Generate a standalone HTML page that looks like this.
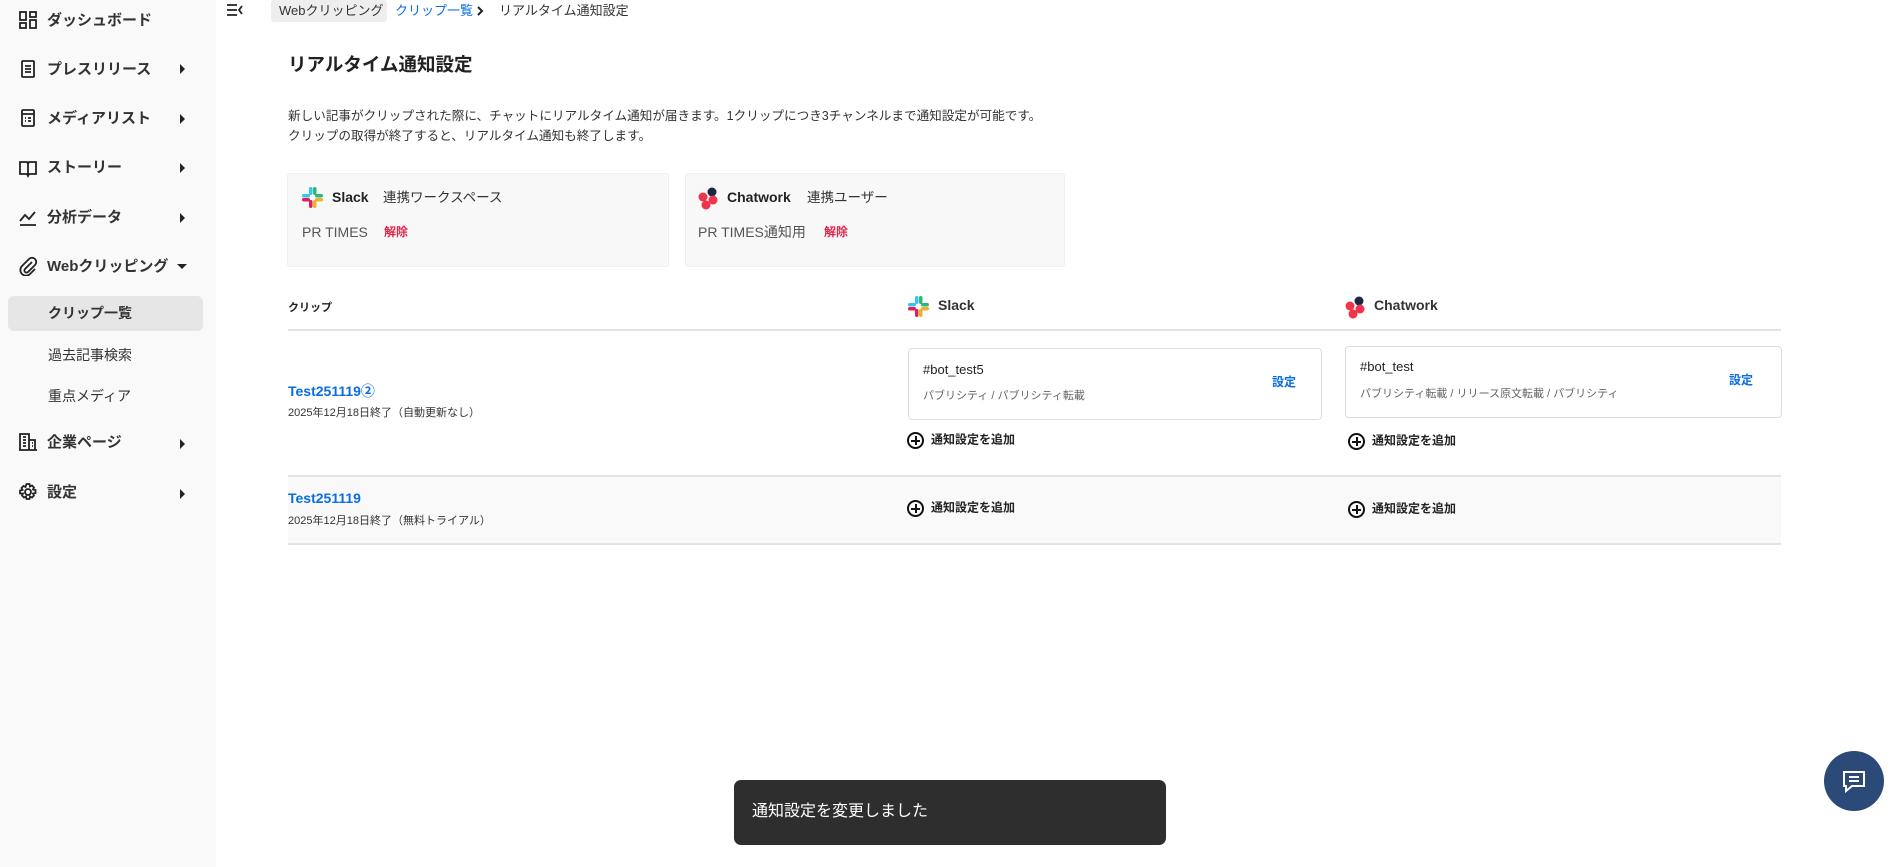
<!DOCTYPE html>
<html><head><meta charset="utf-8"><style>
*{margin:0;padding:0;box-sizing:border-box}
body{width:1900px;height:867px;overflow:hidden;background:#fff;font-family:"Liberation Sans","Noto Sans CJK JP",sans-serif;color:#222;position:relative;line-height:1.25}
.a{position:absolute;white-space:nowrap}
#side{position:absolute;left:0;top:0;width:216px;height:867px;background:#f9f9f9}
.nav{font-size:15px;font-weight:bold;color:#333}
.sub{font-size:14px;color:#333}
.arr{width:0;height:0;border-left:5px solid #222;border-top:5px solid transparent;border-bottom:5px solid transparent}
.ic{position:absolute;left:18px;width:20px;height:20px}
.blue{color:#0b6de0}
.card{position:absolute;background:#f8f8f8;border:1px solid #eee;border-radius:3px}
.box{position:absolute;border:1px solid #ddd;border-radius:4px;background:#fff}
.plus{display:inline-block;width:17px;height:17px;border:2px solid #111;border-radius:50%;position:relative;vertical-align:middle;margin-right:7px}
.plus:before{content:"";position:absolute;left:6px;top:2px;width:1.6px;height:9px;background:#111}
.plus:after{content:"";position:absolute;left:2px;top:6px;width:9px;height:1.6px;background:#111}
.add{font-size:12px;font-weight:bold}
</style></head><body>
<div id="side"></div>
<svg class="ic" style="top:10px" viewBox="0 0 20 20" fill="none" stroke="#222" stroke-width="1.8"><rect x="2" y="2" width="6" height="8"/><rect x="12" y="2" width="6" height="5"/><rect x="2" y="13" width="6" height="5"/><rect x="12" y="10" width="6" height="8"/></svg>
<div class="a nav" style="left:47px;top:12px">ダッシュボード</div>
<svg class="ic" style="top:59px" viewBox="0 0 20 20" fill="none" stroke="#222" stroke-width="1.8"><rect x="4" y="2" width="12" height="16" rx="1"/><path d="M7 7h6M7 10h6M7 13h6"/></svg>
<div class="a nav" style="left:47px;top:61px">プレスリリース</div>
<svg class="ic" style="top:108px" viewBox="0 0 20 20" fill="none" stroke="#222" stroke-width="1.8"><rect x="4" y="2" width="12" height="16" rx="1"/><path d="M4 6h12M7 10h1M10 10h3M7 13h1M10 13h3"/></svg>
<div class="a nav" style="left:47px;top:110px">メディアリスト</div>
<svg class="ic" style="top:158px" viewBox="0 0 20 20" fill="none" stroke="#222" stroke-width="1.8"><path d="M2 4h7l1 2 1-2h7v12h-7l-1 2-1-2H2zM10 6v12"/></svg>
<div class="a nav" style="left:47px;top:159px">ストーリー</div>
<svg class="ic" style="top:207px" viewBox="0 0 20 20" fill="none" stroke="#222" stroke-width="1.8"><path d="M2 14l5-6 4 4 6-7M2 18h16"/></svg>
<div class="a nav" style="left:47px;top:209px">分析データ</div>
<svg class="ic" style="top:256px" viewBox="0 0 20 20" fill="none" stroke="#222" stroke-width="1.8"><path d="M14 6l-7 7a2 2 0 0 0 3 3l7-7a4 4 0 0 0-6-6l-7 7a5 5 0 0 0 8 8l5-5"/></svg>
<div class="a nav" style="left:47px;top:258px">Webクリッピング</div>
<div class="a arr" style="left:180px;top:64px"></div>
<div class="a arr" style="left:180px;top:114px"></div>
<div class="a arr" style="left:180px;top:163px"></div>
<div class="a arr" style="left:180px;top:213px"></div>
<div class="a" style="left:177px;top:264px;border-top:5px solid #222;border-left:5px solid transparent;border-right:5px solid transparent"></div>
<div class="a" style="left:8px;top:296px;width:195px;height:35px;background:#e6e6e6;border-radius:6px"></div>
<div class="a sub" style="left:48px;top:305px;font-weight:bold">クリップ一覧</div>
<div class="a sub" style="left:48px;top:347px">過去記事検索</div>
<div class="a sub" style="left:48px;top:388px">重点メディア</div>
<svg class="ic" style="top:432px" viewBox="0 0 20 20" fill="none" stroke="#222" stroke-width="1.8"><path d="M2 18V2h9v16M11 8h6v10M1 18h18M5 5h3M5 8h3M5 11h3M5 14h3M14 11h1M14 14h1"/></svg>
<div class="a nav" style="left:47px;top:434px">企業ページ</div>
<div class="a arr" style="left:180px;top:439px"></div>
<svg class="ic" style="top:482px" viewBox="0 0 20 20" fill="none" stroke="#222" stroke-width="1.8"><circle cx="10" cy="10" r="3"/><path d="M8.5 2h3l.5 2.5 2-1 2 2-1 2 2.5.5v3l-2.5.5 1 2-2 2-2-1-.5 2.5h-3l-.5-2.5-2 1-2-2 1-2L2 11.5v-3L4.5 8l-1-2 2-2 2 1z"/></svg>
<div class="a nav" style="left:47px;top:484px">設定</div>
<div class="a arr" style="left:180px;top:489px"></div>

<svg class="a" style="left:226px;top:2px" width="18" height="16" viewBox="0 0 18 16" stroke="#222" stroke-width="1.8" fill="none"><path d="M1 3h10M1 8h10M1 13h10M16 4l-3 4 3 4"/></svg>
<div class="a" style="left:271px;top:0;width:116px;height:22px;background:#eee;border-radius:3px;font-size:13px;padding:3px 8px;color:#333">Webクリッピング</div>
<div class="a blue" style="left:395px;top:3px;font-size:13px">クリップ一覧</div>
<svg class="a" style="left:476px;top:5px" width="8" height="12" viewBox="0 0 8 12" fill="none" stroke="#222" stroke-width="2"><path d="M2 2l4 4-4 4"/></svg>
<div class="a" style="left:499px;top:3px;font-size:13px;color:#333">リアルタイム通知設定</div>

<div class="a" style="left:288px;top:53px;font-size:18.5px;font-weight:bold">リアルタイム通知設定</div>
<div class="a" style="left:288px;top:106px;font-size:12.6px;line-height:20px;color:#333">新しい記事がクリップされた際に、チャットにリアルタイム通知が届きます。1クリップにつき3チャンネルまで通知設定が可能です。<br>クリップの取得が終了すると、リアルタイム通知も終了します。</div>

<svg width="0" height="0" style="position:absolute"><defs>
<g id="slack"><rect x="7" y="0" width="3.5" height="8" rx="1.7" fill="#36c5f0"/><rect x="0" y="7" width="8" height="3.5" rx="1.7" fill="#36c5f0"/><rect x="11" y="0" width="3.5" height="8" rx="1.7" fill="#2eb67d"/><rect x="13" y="7" width="8" height="3.5" rx="1.7" fill="#2eb67d"/><rect x="0" y="11" width="8" height="3.5" rx="1.7" fill="#e01e5a"/><rect x="7" y="13" width="3.5" height="8" rx="1.7" fill="#e01e5a"/><rect x="13" y="11" width="8" height="3.5" rx="1.7" fill="#ecb22e"/><rect x="11" y="13" width="3.5" height="8" rx="1.7" fill="#ecb22e"/></g>
<g id="cw"><circle cx="14" cy="5" r="4.5" fill="#1c2741"/><circle cx="5" cy="10" r="4.5" fill="#f0344b"/><circle cx="15" cy="13" r="4.5" fill="#f0344b"/><circle cx="8" cy="18" r="4.5" fill="#f0344b"/></g></defs></svg>

<div class="card" style="left:287px;top:173px;width:382px;height:94px"></div>
<svg class="a" style="left:302px;top:187px" width="21" height="22"><use href="#slack"/></svg>
<div class="a" style="left:332px;top:189px;font-size:14px;font-weight:bold">Slack</div>
<div class="a" style="left:383px;top:190px;font-size:13.5px;color:#333">連携ワークスペース</div>
<div class="a" style="left:302px;top:224px;font-size:14px;color:#555">PR TIMES</div>
<div class="a" style="left:384px;top:225px;font-size:12px;font-weight:bold;color:#e0244a">解除</div>

<div class="card" style="left:685px;top:173px;width:380px;height:94px"></div>
<svg class="a" style="left:698px;top:187px" width="21" height="23"><use href="#cw"/></svg>
<div class="a" style="left:727px;top:189px;font-size:14px;font-weight:bold">Chatwork</div>
<div class="a" style="left:807px;top:190px;font-size:13.5px;color:#333">連携ユーザー</div>
<div class="a" style="left:698px;top:224px;font-size:14px;color:#555">PR TIMES通知用</div>
<div class="a" style="left:824px;top:225px;font-size:12px;font-weight:bold;color:#e0244a">解除</div>

<div class="a" style="left:288px;top:302px;font-size:11px;font-weight:bold">クリップ</div>
<svg class="a" style="left:908px;top:296px" width="21" height="22"><use href="#slack"/></svg>
<div class="a" style="left:938px;top:297px;font-size:14px;font-weight:bold;color:#333">Slack</div>
<svg class="a" style="left:1345px;top:296px" width="21" height="23"><use href="#cw"/></svg>
<div class="a" style="left:1374px;top:297px;font-size:14px;font-weight:bold;color:#333">Chatwork</div>
<div class="a" style="left:288px;top:329px;width:1493px;height:2px;background:#e3e3e3"></div>

<div class="a blue" style="left:288px;top:383px;font-size:14px;font-weight:bold">Test251119②</div>
<div class="a" style="left:288px;top:407px;font-size:11px;color:#333">2025年12月18日終了（自動更新なし）</div>
<div class="box" style="left:908px;top:348px;width:414px;height:72px"></div>
<div class="a" style="left:923px;top:362px;font-size:13px">#bot_test5</div>
<div class="a" style="left:923px;top:390px;font-size:11px;color:#666">パブリシティ / パブリシティ転載</div>
<div class="a blue" style="left:1272px;top:375px;font-size:12px;font-weight:bold">設定</div>
<div class="box" style="left:1345px;top:346px;width:437px;height:72px"></div>
<div class="a" style="left:1360px;top:359px;font-size:13px">#bot_test</div>
<div class="a" style="left:1360px;top:388px;font-size:11px;color:#666">パブリシティ転載 / リリース原文転載 / パブリシティ</div>
<div class="a blue" style="left:1729px;top:373px;font-size:12px;font-weight:bold">設定</div>
<div class="a add" style="left:907px;top:432px"><span class="plus"></span>通知設定を追加</div>
<div class="a add" style="left:1348px;top:433px"><span class="plus"></span>通知設定を追加</div>

<div class="a" style="left:288px;top:475px;width:1493px;height:70px;background:#f9f9f9;border-top:2px solid #e3e3e3;border-bottom:2px solid #e3e3e3"></div>
<div class="a blue" style="left:288px;top:490px;font-size:14px;font-weight:bold">Test251119</div>
<div class="a" style="left:288px;top:515px;font-size:11px;color:#333">2025年12月18日終了（無料トライアル）</div>
<div class="a add" style="left:907px;top:500px"><span class="plus"></span>通知設定を追加</div>
<div class="a add" style="left:1348px;top:501px"><span class="plus"></span>通知設定を追加</div>

<div class="a" style="left:734px;top:780px;width:432px;height:65px;background:#2e2e2e;border-radius:7px;color:#fff;font-size:16px;padding:22px 18px">通知設定を変更しました</div>
<div class="a" style="left:1824px;top:751px;width:60px;height:60px;border-radius:50%;background:#2b4a78"></div>
<svg class="a" style="left:1840px;top:767px" width="28" height="28" viewBox="0 0 28 28" fill="none" stroke="#fff" stroke-width="2"><path d="M4 5h20v14H12l-6 5v-5H4z"/><path d="M9 10h10M9 14h10"/></svg>
</body></html>
